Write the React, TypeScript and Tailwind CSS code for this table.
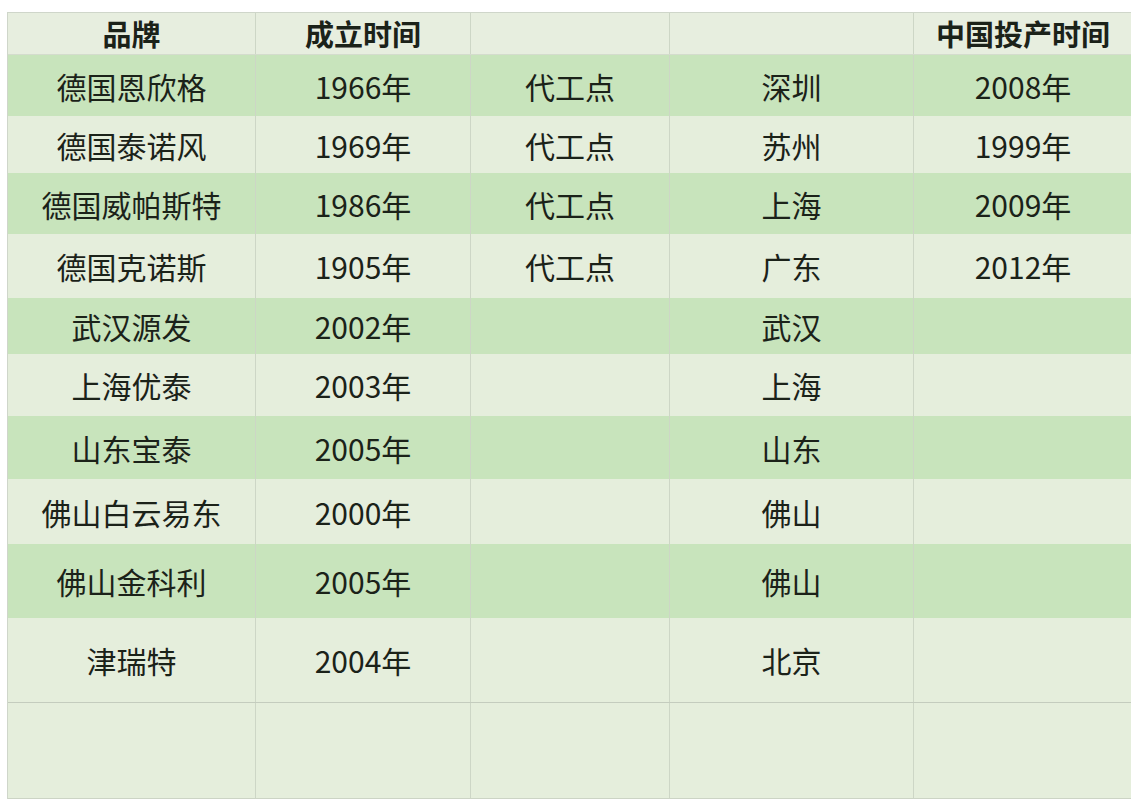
import React from 'react';

type Row = {
  cells: string[];
  h: string;
  green: boolean;
};

const rows: Row[] = [
  { cells: ['德国恩欣格', '1966年', '代工点', '深圳', '2008年'], h: 'h-[61px]', green: true },
  { cells: ['德国泰诺风', '1969年', '代工点', '苏州', '1999年'], h: 'h-[57px]', green: false },
  { cells: ['德国威帕斯特', '1986年', '代工点', '上海', '2009年'], h: 'h-[61px]', green: true },
  { cells: ['德国克诺斯', '1905年', '代工点', '广东', '2012年'], h: 'h-[64px]', green: false },
  { cells: ['武汉源发', '2002年', '', '武汉', ''], h: 'h-[56px]', green: true },
  { cells: ['上海优泰', '2003年', '', '上海', ''], h: 'h-[62px]', green: false },
  { cells: ['山东宝泰', '2005年', '', '山东', ''], h: 'h-[63px]', green: true },
  { cells: ['佛山白云易东', '2000年', '', '佛山', ''], h: 'h-[65px]', green: false },
  { cells: ['佛山金科利', '2005年', '', '佛山', ''], h: 'h-[74px]', green: true },
  { cells: ['津瑞特', '2004年', '', '北京', ''], h: 'h-[85px]', green: false },
  { cells: ['', '', '', '', ''], h: 'h-[96px]', green: false },
];

const colW = ['w-[248px]', 'w-[215px]', 'w-[199px]', 'w-[244px]', 'w-[218px]'];

const header = ['品牌', '成立时间', '', '', '中国投产时间'];

const Cell: React.FC<{ text: string; i: number; bold?: boolean }> = ({ text, i, bold }) => (
  <div
    className={`${colW[i]} shrink-0 flex items-center justify-center ${
      i < 4 ? 'border-r border-[#cdd6c6]' : ''
    } ${bold ? 'font-bold text-[29px]' : 'text-[30px]'}`}
  >
    {text}
  </div>
);

export default function App() {
  return (
    <div
      className="w-[1131px] h-[800px] bg-white pt-[12px] pl-[7px] overflow-hidden text-[#1b2219]"
      style={{ fontFamily: '"Noto Sans CJK SC", "Noto Sans", sans-serif' }}
    >
      <div className="border-l border-t border-[#cfd6ca] flex flex-col">
        <div className="flex h-[42px] bg-[#e7eedf] border-b border-[#d4dccd] leading-none">
          {header.map((t, i) => (
            <Cell key={i} text={t} i={i} bold />
          ))}
        </div>
        {rows.map((r, ri) => (
          <div
            key={ri}
            className={`flex ${r.h} leading-none ${r.green ? 'bg-[#c8e4bc]' : 'bg-[#e5eedc]'} ${
              ri === rows.length - 1 ? 'border-b border-[#ccd4c5]' : ri === rows.length - 2 ? 'border-b border-[#c4ccbe]' : ''
            }`}
          >
            {r.cells.map((t, i) => (
              <Cell key={i} text={t} i={i} />
            ))}
          </div>
        ))}
      </div>
    </div>
  );
}
